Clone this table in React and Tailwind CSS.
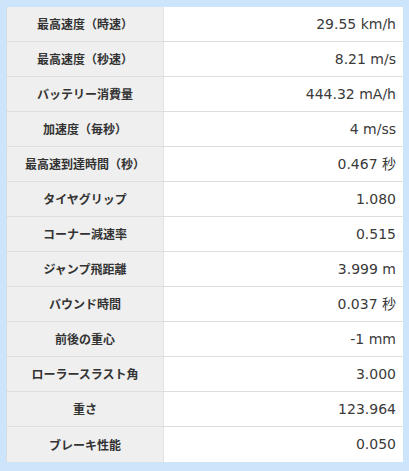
const rows = [
  ['最高速度（時速）', '29.55 km/h'],
  ['最高速度（秒速）', '8.21 m/s'],
  ['バッテリー消費量', '444.32 mA/h'],
  ['加速度（毎秒）', '4 m/ss'],
  ['最高速到達時間（秒）', '0.467 秒'],
  ['タイヤグリップ', '1.080'],
  ['コーナー減速率', '0.515'],
  ['ジャンプ飛距離', '3.999 m'],
  ['バウンド時間', '0.037 秒'],
  ['前後の重心', '-1 mm'],
  ['ローラースラスト角', '3.000'],
  ['重さ', '123.964'],
  ['ブレーキ性能', '0.050'],
];

export default function App() {
  return (
    <div className="w-[409px] h-[471px] bg-[#cde5fb] pt-[7px] pl-[6px]">
      <div className="w-[397px] border-l border-[#d6dce4]">
        {rows.map(([label, value], i) => (
          <div
            key={label}
            className={`flex h-[35px] ${i < rows.length - 1 ? 'border-b border-[#dedede]' : ''}`}
          >
            <div
              className="w-[157px] flex items-center justify-center bg-[#efefef] border-r border-[#e2e2e2] text-[12px] font-bold text-[#333]"
              style={{ fontFamily: '"Noto Sans CJK JP", sans-serif' }}
            >
              {label}
            </div>
            <div
              className="flex-1 flex items-center justify-end pr-[7px] bg-white text-[14px] text-[#3a3a3a]"
              style={{ fontFamily: '"DejaVu Sans", "Noto Sans CJK JP", sans-serif' }}
            >
              {value}
            </div>
          </div>
        ))}
      </div>
    </div>
  );
}
